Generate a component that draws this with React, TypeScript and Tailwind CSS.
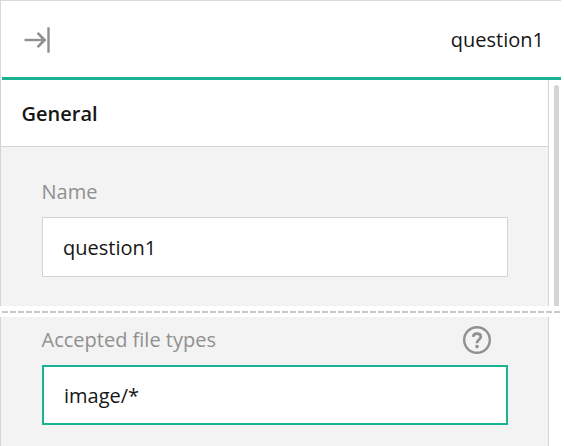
import React from "react";

function CollapseIcon() {
  return (
    <svg width="28" height="28" viewBox="0 0 28 28" fill="none" stroke="#909090" strokeWidth="2.4" className="block">
      <path d="M1.5 14H21.5" />
      <path d="M14.6 6.9L21.6 14L14.6 21.1" strokeWidth="2.7" />
      <path d="M25.5 1.3V26.7" />
    </svg>
  );
}

function HelpIcon() {
  return (
    <svg width="28" height="28" viewBox="0 0 28 28" fill="none" stroke="#909090" className="block">
      <circle cx="14" cy="14" r="12.8" strokeWidth="2.4" />
      <path d="M10.2 10.8C10.4 8.8 11.8 7.7 14 7.7C16.3 7.7 17.8 8.9 17.8 10.8C17.8 13.6 14 13.6 14 17.2" strokeWidth="2.7" />
      <circle cx="14" cy="20.6" r="1.8" fill="#909090" stroke="none" />
    </svg>
  );
}

function Field({ label, value, active, help }: { label: string; value: string; active?: boolean; help?: boolean }) {
  return (
    <div>
      <div className="flex h-7 items-center justify-between pr-[17px] text-[#909090]">
        <label className="-ml-[0.5px]">{label}</label>
        {help && <HelpIcon />}
      </div>
      <div
        className={
          active
            ? "mt-[11px] flex h-[60px] items-center border-2 border-[#19b394] bg-white px-5 pt-0.5"
            : "mt-[11px] flex h-[60px] items-center border border-[#d4d4d4] bg-white px-5 pt-0.5"
        }
      >
        {value}
      </div>
    </div>
  );
}

export default function App() {
  return (
    <div className="flex h-[446px] w-[561px] flex-col overflow-hidden bg-white font-['Open_Sans','Noto_Sans',sans-serif] text-[20px] leading-7 text-[#161616]">
      <header className="flex h-20 shrink-0 border-t border-l border-[#d9d9d9] pl-px">
        <div className="flex flex-1 items-center justify-between border-b-[3px] border-[#19b394] pr-[17px] pl-[21px] pt-px">
          <CollapseIcon />
          <span>question1</span>
        </div>
      </header>
      <div className="flex h-[226px] shrink-0">
        <section className="w-[549px] border-x border-[#d4d4d4] bg-[#f3f3f3]">
          <h2 className="flex h-[67px] items-center border-b border-[#d4d4d4] bg-white pl-[20.5px] pt-0.5 font-semibold">General</h2>
          <div className="pt-[31px] pr-10 pl-[41px]">
            <Field label="Name" value="question1" />
          </div>
        </section>
        <div className="mt-[5px] ml-[5px] w-[5px] rounded-t-full bg-[#d4d4d4]" />
      </div>
      <div className="h-[11px] shrink-0 pt-[5px] pl-0.5">
        <div className="h-0.5 w-full bg-[repeating-linear-gradient(to_right,#c8c8c8_0px,#c8c8c8_6px,transparent_6px,transparent_8px)]" />
      </div>
      <section className="w-[549px] flex-1 border-x border-[#d4d4d4] bg-[#f3f3f3] pt-[9px] pr-10 pl-[41px]">
        <Field label="Accepted file types" value="image/*" active help />
      </section>
    </div>
  );
}
